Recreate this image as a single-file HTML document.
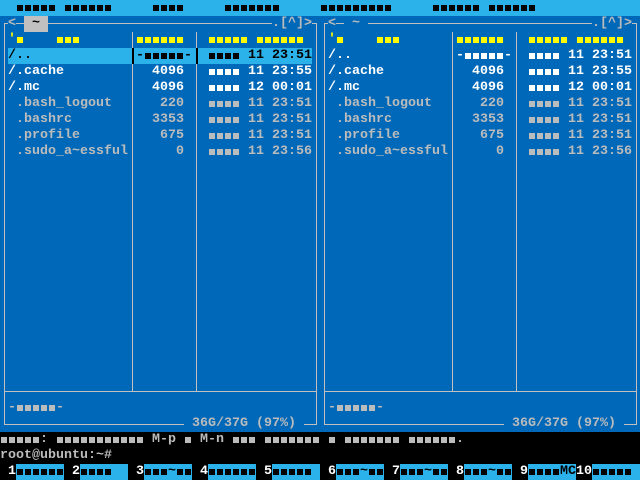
<!DOCTYPE html><html><head><style>
*{margin:0;padding:0}
body{width:640px;height:480px;background:#000;position:relative;overflow:hidden;font-family:"Liberation Mono",monospace;font-size:13.33px;line-height:16px;font-weight:bold}
.t{position:absolute;white-space:pre;height:16px}
.s{display:inline-block;width:8px;height:16px;position:relative;vertical-align:top}
.s:after{content:'';position:absolute;left:1px;top:5px;width:6px;height:6px;background:currentColor}
.l{position:absolute;background:#c0c0c0}
.bl{background:#0068b8}
.w{color:#fff}.g{color:#bcbcbc}.y{color:#ffff00}.k{color:#000}
</style></head><body>
<div style="position:absolute;left:0;top:0;width:640px;height:16px;background:#2cb2ea"></div>
<div style="position:absolute;left:0;top:16px;width:640px;height:416px;background:#0068b8"></div>
<div style="position:absolute;left:0;top:464px;width:640px;height:16px;background:#000"></div>
<div class="t k" style="left:16px;top:0"><i class="s"></i><i class="s"></i><i class="s"></i><i class="s"></i><i class="s"></i> <i class="s"></i><i class="s"></i><i class="s"></i><i class="s"></i><i class="s"></i><i class="s"></i></div>
<div class="t k" style="left:152px;top:0"><i class="s"></i><i class="s"></i><i class="s"></i><i class="s"></i></div>
<div class="t k" style="left:224px;top:0"><i class="s"></i><i class="s"></i><i class="s"></i><i class="s"></i><i class="s"></i><i class="s"></i><i class="s"></i></div>
<div class="t k" style="left:320px;top:0"><i class="s"></i><i class="s"></i><i class="s"></i><i class="s"></i><i class="s"></i><i class="s"></i><i class="s"></i><i class="s"></i><i class="s"></i></div>
<div class="t k" style="left:432px;top:0"><i class="s"></i><i class="s"></i><i class="s"></i><i class="s"></i><i class="s"></i><i class="s"></i></div>
<div class="t k" style="left:488px;top:0"><i class="s"></i><i class="s"></i><i class="s"></i><i class="s"></i><i class="s"></i><i class="s"></i></div>

<div class="l" style="left:4px;top:23px;width:313px;height:1px"></div>
<div class="l" style="left:4px;top:23px;width:1px;height:402px"></div>
<div class="l" style="left:316px;top:23px;width:1px;height:402px"></div>
<div class="l" style="left:4px;top:424px;width:313px;height:1px"></div>
<div class="l" style="left:4px;top:391px;width:313px;height:1px"></div>
<div class="l" style="left:132px;top:32px;width:1px;height:360px"></div>
<div class="l" style="left:196px;top:32px;width:1px;height:360px"></div>
<div class="t g bl" style="left:8px;top:16px">&lt;</div>
<div class="t k" style="left:24px;top:16px;width:24px;background:#c0c0c0"> ~ </div>
<div class="t g bl" style="left:272px;top:16px">.[^]&gt;</div>
<div class="t y" style="left:8px;top:32px">'<i class="s"></i>    <i class="s"></i><i class="s"></i><i class="s"></i></div>
<div class="t y" style="left:136px;top:32px"><i class="s"></i><i class="s"></i><i class="s"></i><i class="s"></i><i class="s"></i><i class="s"></i></div>
<div class="t y" style="left:208px;top:32px"><i class="s"></i><i class="s"></i><i class="s"></i><i class="s"></i><i class="s"></i> <i class="s"></i><i class="s"></i><i class="s"></i><i class="s"></i><i class="s"></i><i class="s"></i></div>
<div style="position:absolute;left:8px;top:48px;width:304px;height:16px;background:#2cb2ea"></div>
<div style="position:absolute;left:132px;top:48px;width:2px;height:16px;background:#000"></div>
<div style="position:absolute;left:196px;top:48px;width:2px;height:16px;background:#000"></div>
<div class="t k" style="left:8px;top:48px">/..</div>
<div class="t k" style="left:136px;top:48px">-<i class="s"></i><i class="s"></i><i class="s"></i><i class="s"></i><i class="s"></i>-</div>
<div class="t k" style="left:208px;top:48px"><i class="s"></i><i class="s"></i><i class="s"></i><i class="s"></i> 11 23:51</div>
<div class="t w" style="left:8px;top:64px">/.cache</div><div class="t w" style="left:152px;top:64px">4096</div>
<div class="t w" style="left:208px;top:64px"><i class="s"></i><i class="s"></i><i class="s"></i><i class="s"></i> 11 23:55</div>
<div class="t w" style="left:8px;top:80px">/.mc</div><div class="t w" style="left:152px;top:80px">4096</div>
<div class="t w" style="left:208px;top:80px"><i class="s"></i><i class="s"></i><i class="s"></i><i class="s"></i> 12 00:01</div>
<div class="t g" style="left:8px;top:96px"> .bash_logout</div><div class="t g" style="left:160px;top:96px">220</div>
<div class="t g" style="left:208px;top:96px"><i class="s"></i><i class="s"></i><i class="s"></i><i class="s"></i> 11 23:51</div>
<div class="t g" style="left:8px;top:112px"> .bashrc</div><div class="t g" style="left:152px;top:112px">3353</div>
<div class="t g" style="left:208px;top:112px"><i class="s"></i><i class="s"></i><i class="s"></i><i class="s"></i> 11 23:51</div>
<div class="t g" style="left:8px;top:128px"> .profile</div><div class="t g" style="left:160px;top:128px">675</div>
<div class="t g" style="left:208px;top:128px"><i class="s"></i><i class="s"></i><i class="s"></i><i class="s"></i> 11 23:51</div>
<div class="t g" style="left:8px;top:144px"> .sudo_a~essful</div><div class="t g" style="left:176px;top:144px">0</div>
<div class="t g" style="left:208px;top:144px"><i class="s"></i><i class="s"></i><i class="s"></i><i class="s"></i> 11 23:56</div>
<div class="t g" style="left:8px;top:400px">-<i class="s"></i><i class="s"></i><i class="s"></i><i class="s"></i><i class="s"></i>-</div>
<div class="t g bl" style="left:184px;top:416px"> 36G/37G (97%) </div>

<div class="l" style="left:324px;top:23px;width:313px;height:1px"></div>
<div class="l" style="left:324px;top:23px;width:1px;height:402px"></div>
<div class="l" style="left:636px;top:23px;width:1px;height:402px"></div>
<div class="l" style="left:324px;top:424px;width:313px;height:1px"></div>
<div class="l" style="left:324px;top:391px;width:313px;height:1px"></div>
<div class="l" style="left:452px;top:32px;width:1px;height:360px"></div>
<div class="l" style="left:516px;top:32px;width:1px;height:360px"></div>
<div class="t g bl" style="left:328px;top:16px">&lt;</div>
<div class="t g bl" style="left:344px;top:16px;width:24px"> ~ </div>
<div class="t g bl" style="left:592px;top:16px">.[^]&gt;</div>
<div class="t y" style="left:328px;top:32px">'<i class="s"></i>    <i class="s"></i><i class="s"></i><i class="s"></i></div>
<div class="t y" style="left:456px;top:32px"><i class="s"></i><i class="s"></i><i class="s"></i><i class="s"></i><i class="s"></i><i class="s"></i></div>
<div class="t y" style="left:528px;top:32px"><i class="s"></i><i class="s"></i><i class="s"></i><i class="s"></i><i class="s"></i> <i class="s"></i><i class="s"></i><i class="s"></i><i class="s"></i><i class="s"></i><i class="s"></i></div>
<div class="t w" style="left:328px;top:48px">/..</div>
<div class="t w" style="left:456px;top:48px">-<i class="s"></i><i class="s"></i><i class="s"></i><i class="s"></i><i class="s"></i>-</div>
<div class="t w" style="left:528px;top:48px"><i class="s"></i><i class="s"></i><i class="s"></i><i class="s"></i> 11 23:51</div>
<div class="t w" style="left:328px;top:64px">/.cache</div><div class="t w" style="left:472px;top:64px">4096</div>
<div class="t w" style="left:528px;top:64px"><i class="s"></i><i class="s"></i><i class="s"></i><i class="s"></i> 11 23:55</div>
<div class="t w" style="left:328px;top:80px">/.mc</div><div class="t w" style="left:472px;top:80px">4096</div>
<div class="t w" style="left:528px;top:80px"><i class="s"></i><i class="s"></i><i class="s"></i><i class="s"></i> 12 00:01</div>
<div class="t g" style="left:328px;top:96px"> .bash_logout</div><div class="t g" style="left:480px;top:96px">220</div>
<div class="t g" style="left:528px;top:96px"><i class="s"></i><i class="s"></i><i class="s"></i><i class="s"></i> 11 23:51</div>
<div class="t g" style="left:328px;top:112px"> .bashrc</div><div class="t g" style="left:472px;top:112px">3353</div>
<div class="t g" style="left:528px;top:112px"><i class="s"></i><i class="s"></i><i class="s"></i><i class="s"></i> 11 23:51</div>
<div class="t g" style="left:328px;top:128px"> .profile</div><div class="t g" style="left:480px;top:128px">675</div>
<div class="t g" style="left:528px;top:128px"><i class="s"></i><i class="s"></i><i class="s"></i><i class="s"></i> 11 23:51</div>
<div class="t g" style="left:328px;top:144px"> .sudo_a~essful</div><div class="t g" style="left:496px;top:144px">0</div>
<div class="t g" style="left:528px;top:144px"><i class="s"></i><i class="s"></i><i class="s"></i><i class="s"></i> 11 23:56</div>
<div class="t g" style="left:328px;top:400px">-<i class="s"></i><i class="s"></i><i class="s"></i><i class="s"></i><i class="s"></i>-</div>
<div class="t g bl" style="left:504px;top:416px"> 36G/37G (97%) </div>

<div class="t g" style="left:0;top:432px"><i class="s"></i><i class="s"></i><i class="s"></i><i class="s"></i><i class="s"></i>: <i class="s"></i><i class="s"></i><i class="s"></i><i class="s"></i><i class="s"></i><i class="s"></i><i class="s"></i><i class="s"></i><i class="s"></i><i class="s"></i><i class="s"></i> M-p <i class="s"></i> M-n <i class="s"></i><i class="s"></i><i class="s"></i> <i class="s"></i><i class="s"></i><i class="s"></i><i class="s"></i><i class="s"></i><i class="s"></i><i class="s"></i> <i class="s"></i> <i class="s"></i><i class="s"></i><i class="s"></i><i class="s"></i><i class="s"></i><i class="s"></i><i class="s"></i> <i class="s"></i><i class="s"></i><i class="s"></i><i class="s"></i><i class="s"></i><i class="s"></i>.</div>
<div class="t g" style="left:0;top:448px">root@ubuntu:~#</div>

<div style="position:absolute;left:16px;top:464px;width:48px;height:16px;background:#2cb2ea"></div>
<div style="position:absolute;left:80px;top:464px;width:48px;height:16px;background:#2cb2ea"></div>
<div style="position:absolute;left:144px;top:464px;width:48px;height:16px;background:#2cb2ea"></div>
<div style="position:absolute;left:208px;top:464px;width:48px;height:16px;background:#2cb2ea"></div>
<div style="position:absolute;left:272px;top:464px;width:48px;height:16px;background:#2cb2ea"></div>
<div style="position:absolute;left:336px;top:464px;width:48px;height:16px;background:#2cb2ea"></div>
<div style="position:absolute;left:400px;top:464px;width:48px;height:16px;background:#2cb2ea"></div>
<div style="position:absolute;left:464px;top:464px;width:48px;height:16px;background:#2cb2ea"></div>
<div style="position:absolute;left:528px;top:464px;width:48px;height:16px;background:#2cb2ea"></div>
<div style="position:absolute;left:592px;top:464px;width:48px;height:16px;background:#2cb2ea"></div>
<div class="t w" style="left:8px;top:464px">1</div><div class="t k" style="left:16px;top:464px"><i class="s"></i><i class="s"></i><i class="s"></i><i class="s"></i><i class="s"></i><i class="s"></i></div>
<div class="t w" style="left:72px;top:464px">2</div><div class="t k" style="left:80px;top:464px"><i class="s"></i><i class="s"></i><i class="s"></i><i class="s"></i></div>
<div class="t w" style="left:136px;top:464px">3</div><div class="t k" style="left:144px;top:464px"><i class="s"></i><i class="s"></i><i class="s"></i>~<i class="s"></i><i class="s"></i></div>
<div class="t w" style="left:200px;top:464px">4</div><div class="t k" style="left:208px;top:464px"><i class="s"></i><i class="s"></i><i class="s"></i><i class="s"></i><i class="s"></i><i class="s"></i></div>
<div class="t w" style="left:264px;top:464px">5</div><div class="t k" style="left:272px;top:464px"><i class="s"></i><i class="s"></i><i class="s"></i><i class="s"></i><i class="s"></i></div>
<div class="t w" style="left:328px;top:464px">6</div><div class="t k" style="left:336px;top:464px"><i class="s"></i><i class="s"></i><i class="s"></i>~<i class="s"></i><i class="s"></i></div>
<div class="t w" style="left:392px;top:464px">7</div><div class="t k" style="left:400px;top:464px"><i class="s"></i><i class="s"></i><i class="s"></i>~<i class="s"></i><i class="s"></i></div>
<div class="t w" style="left:456px;top:464px">8</div><div class="t k" style="left:464px;top:464px"><i class="s"></i><i class="s"></i><i class="s"></i>~<i class="s"></i><i class="s"></i></div>
<div class="t w" style="left:520px;top:464px">9</div><div class="t k" style="left:528px;top:464px"><i class="s"></i><i class="s"></i><i class="s"></i><i class="s"></i>MC</div>
<div class="t w" style="left:576px;top:464px">10</div><div class="t k" style="left:592px;top:464px"><i class="s"></i><i class="s"></i><i class="s"></i><i class="s"></i><i class="s"></i></div>
</body></html>
